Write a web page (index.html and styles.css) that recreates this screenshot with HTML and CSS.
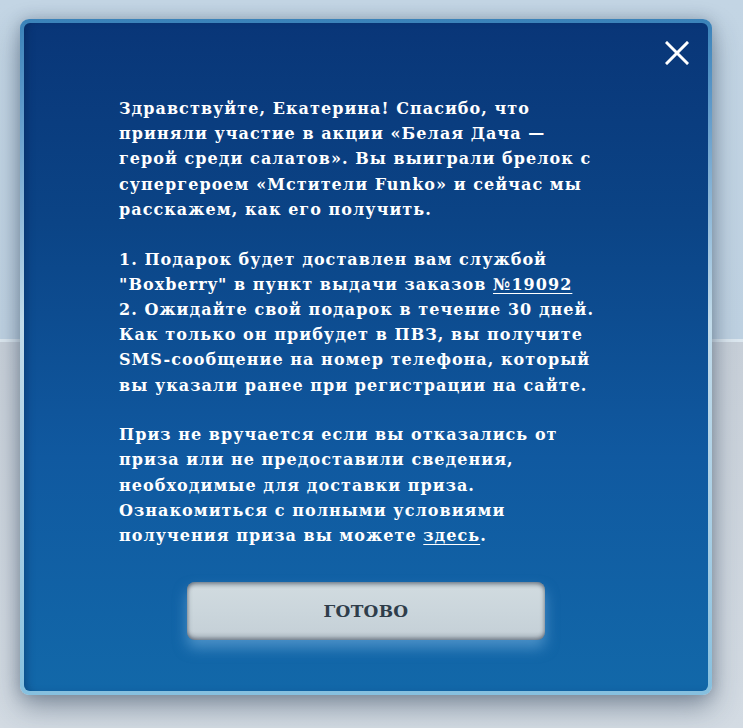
FILE: index.html
```html
<!DOCTYPE html>
<html lang="ru">
<head>
<meta charset="utf-8">
<title>Приз</title>
<link rel="stylesheet" href="styles.css">
</head>
<body>
<div class="page">
  <div class="band-top"></div>
  <div class="band-line"></div>
  <div class="band-bottom"></div>
</div>
<div class="modal">
  <div class="modal-inner">
    <button class="close" aria-label="Закрыть">
      <svg width="24" height="24" viewBox="0 0 24 24"><path d="M2 2 L22 22 M22 2 L2 22" stroke="#fff" stroke-width="3" stroke-linecap="square" fill="none"/></svg>
    </button>
    <div class="text">
      <p>Здравствуйте, Екатерина! Спасибо, что<br>приняли участие в акции «Белая Дача —<br>герой среди салатов». Вы выиграли брелок с<br>супергероем «Мстители Funko» и сейчас мы<br>расскажем, как его получить.</p>
      <p>1. Подарок будет доставлен вам службой<br>"Boxberry" в пункт выдачи заказов <a href="#">№19092</a><br>2. Ожидайте свой подарок в течение 30 дней.<br>Как только он прибудет в ПВЗ, вы получите<br>SMS-сообщение на номер телефона, который<br>вы указали ранее при регистрации на сайте.</p>
      <p>Приз не вручается если вы отказались от<br>приза или не предоставили сведения,<br>необходимые для доставки приза.<br>Ознакомиться с полными условиями<br>получения приза вы можете <a href="#">здесь</a>.</p>
    </div>
    <div class="actions">
      <button class="done">ГОТОВО</button>
    </div>
  </div>
</div>
</body>
</html>
```

FILE: styles.css
```css
html, body {
  margin: 0;
  padding: 0;
  height: 100%;
}
body {
  position: relative;
  overflow: hidden;
  font-family: "DejaVu Serif", "Liberation Serif", serif;
}
.page {
  display: flex;
  flex-direction: column;
  height: 728px;
}
.band-top {
  height: 339px;
  background: linear-gradient(180deg, #c3d5e4 0%, #bfd2e2 100%);
}
.band-line {
  height: 3px;
  background: #dde8f0;
}
.band-bottom {
  flex: 1;
  background: linear-gradient(180deg, #c8d0d9 0%, #d3dbe3 100%);
}
.modal {
  position: absolute;
  left: 20px;
  top: 19px;
  width: 692px;
  height: 676px;
  box-sizing: border-box;
  padding: 4px;
  border-radius: 9px;
  background: linear-gradient(180deg, #3a82b9 0%, #5c98c9 12%, #c2dbea 45%, #a9cfe5 75%, #86c0df 100%);
  box-shadow: 0 12px 28px rgba(40, 60, 85, 0.45), 0 0 14px rgba(40, 60, 85, 0.25);
}
.modal-inner {
  position: relative;
  box-sizing: border-box;
  height: 100%;
  border-radius: 6px;
  background: linear-gradient(180deg, #093678 0%, #0b4486 30%, #1059a0 65%, #1268a9 100%);
  box-shadow: inset 6px 0 8px -4px rgba(0, 20, 60, 0.35);
  padding: 73px 0 0 95px;
}
.close {
  position: absolute;
  top: 17px;
  right: 18px;
  width: 26px;
  height: 26px;
  padding: 1px;
  border: 0;
  background: none;
  cursor: pointer;
}
.close svg { display: block; }
.text {
  color: #fff;
  font-size: 16px;
  font-weight: bold;
  line-height: 25.2px;
  letter-spacing: 1.05px;
  white-space: nowrap;
}
.text p {
  margin: 0 0 24.5px;
}
.text p:last-child { margin-bottom: 0; }
.text a {
  color: #fff;
  text-decoration: underline;
  text-underline-offset: 3px;
  text-decoration-thickness: 1px;
}
.actions {
  display: flex;
  padding-left: 68px;
  margin-top: 34px;
}
.done {
  width: 358px;
  height: 58px;
  border: 0;
  border-radius: 8px;
  background: linear-gradient(180deg, #bcc7cf 0%, #d0dadf 12%, #cbd6dc 50%, #c6d1d8 85%, #b3bec6 100%);
  box-shadow: inset 0 4px 4px -2px rgba(70, 80, 95, 0.55), inset 3px 0 4px -2px rgba(70, 80, 95, 0.5), inset -3px 0 4px -2px rgba(70, 80, 95, 0.4), inset 0 -4px 4px -2px rgba(70, 80, 95, 0.5), 0 8px 14px rgba(120, 180, 225, 0.55);
  color: #2f3d4a;
  font-family: "DejaVu Serif", "Liberation Serif", serif;
  font-weight: bold;
  font-size: 17px;
  letter-spacing: 0.3px;
  cursor: pointer;
}
```
